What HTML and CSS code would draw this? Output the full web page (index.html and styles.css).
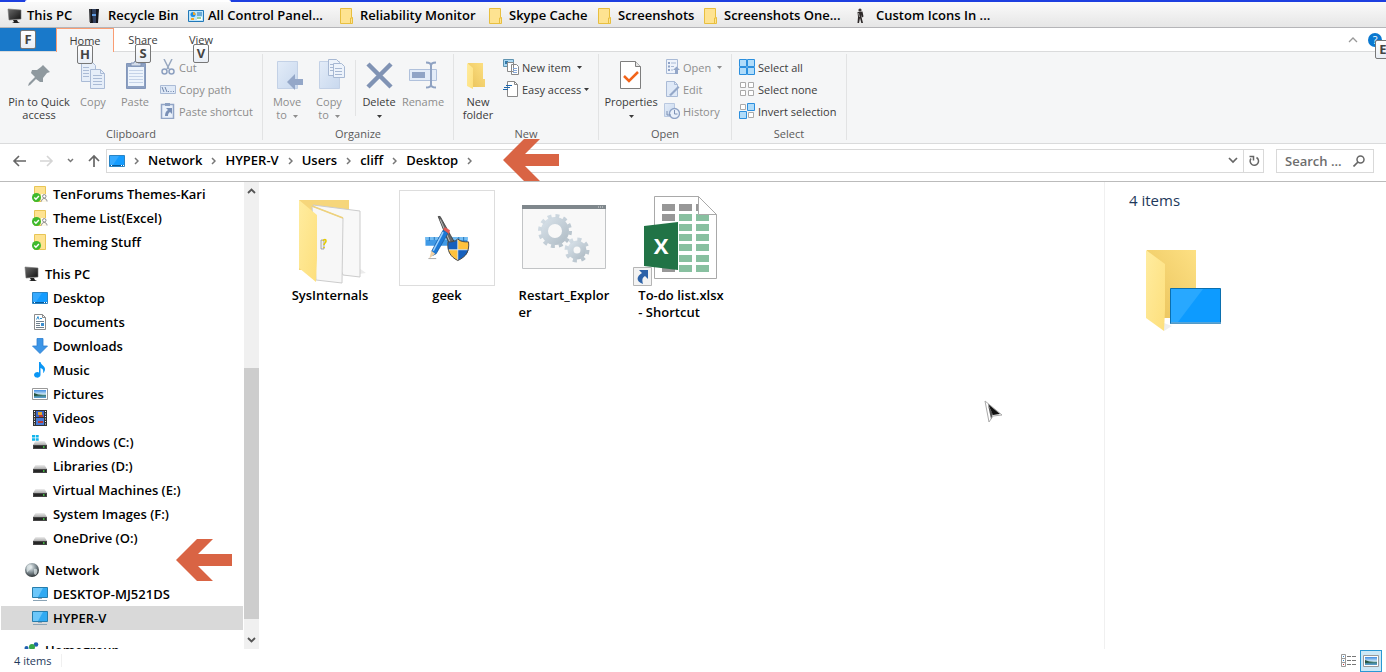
FILE: index.html
```html
<!doctype html>
<html lang="en">
<head>
  <meta charset="utf-8">
  <title>Desktop</title>
  <meta name="viewport" content="width=device-width, initial-scale=1">
  <link rel="stylesheet" href="styles.css">
</head>

<body>
  <svg class="defs" aria-hidden="true">
    <linearGradient id="g_folder" x1="0" y1="0" x2="1" y2="1"><stop offset="0" stop-color="#ffec9f"/><stop offset="1" stop-color="#fddf7c"/></linearGradient>
    <linearGradient id="g_back" x1="0" y1="1" x2="1" y2="0"><stop offset="0" stop-color="#e9c25a"/><stop offset="1" stop-color="#fde083"/></linearGradient>
    <linearGradient id="g_disabled" x1="0" y1="0" x2="1" y2="1"><stop offset="0" stop-color="#e3ecf8"/><stop offset="1" stop-color="#c8d8ee"/></linearGradient>
    <linearGradient id="g_dark" x1="0" y1="0" x2="1" y2="1"><stop offset="0" stop-color="#6b6b6b"/><stop offset="1" stop-color="#111"/></linearGradient>
    <linearGradient id="g_gear" x1="0" y1="0" x2="1" y2="1"><stop offset="0" stop-color="#d5dfe7"/><stop offset="1" stop-color="#b3bfc8"/></linearGradient>
    <linearGradient id="g_drive" x1="0" y1="0" x2="0" y2="1"><stop offset="0" stop-color="#eee"/><stop offset="1" stop-color="#aaa"/></linearGradient>
    <linearGradient id="g_sky" x1="0" y1="0" x2="0" y2="1"><stop offset="0" stop-color="#3f8be0"/><stop offset=".55" stop-color="#d5ecf8"/><stop offset=".6" stop-color="#3f7a6a"/><stop offset="1" stop-color="#5aa0d8"/></linearGradient>
    <radialGradient id="g_globe" cx=".4" cy=".3" r=".7"><stop offset="0" stop-color="#eef3f5"/><stop offset=".5" stop-color="#8a979d"/><stop offset="1" stop-color="#2e3437"/></radialGradient>

    <symbol id="i_pc" viewBox="0 0 16 16"><path d="M1 1l13 1v9l-12 1z" fill="url(#g_dark)" stroke="#777" stroke-width=".6"/><path d="M6 12h4l1 2 2 1H5l2-1z" fill="#222"/></symbol>
    <symbol id="i_bin" viewBox="0 0 16 16"><path d="M1 1h10l-1 14H2z" fill="#14161c"/><path d="M4 1h4v14H5z" fill="#30405e"/><path d="M4 6h4v2H4z" fill="#5f9be0"/><path d="M2 1v13" stroke="#555"/></symbol>
    <symbol id="i_panel" viewBox="0 0 16 16"><path d="M.5 2.500h15v11H.5z" fill="#bfe6fb" stroke="#2178b8"/><circle cx="5" cy="6.500" r="2.500" fill="#1a8ce0"/><path d="M5 4v3h2.500A2.500 2.500 0 0 0 5 4z" fill="#f5a623"/><path d="M9 5h5M9 7h5" stroke="#1a6fb0"/><path d="M3 11h3" stroke="#f5a623" stroke-width="2"/><path d="M9 9h5v3H9z" fill="#fff"/><path d="M9 10h4" stroke="#2da336"/></symbol>
    <symbol id="i_folder" viewBox="0 0 16 16"><path d="M.5.500h11v9h1v6H.5z" fill="#fee391" stroke="#e8bf3f"/><path d="M10.500 15V10h2" fill="none" stroke="#e8bf3f"/></symbol>
    <symbol id="i_man" viewBox="0 0 16 16"><circle cx="4" cy="2" r="1.600" fill="#3a3535"/><path d="M1.500 4l5-.5 1 5-1.500 1-.3-3L5.500 9 7 15H5.300L4 10 3 15H1.500l.5-6z" fill="#2d2828"/><path d="M2.500 5l1 4" stroke="#999"/></symbol>
    <symbol id="i_synced" viewBox="0 0 16 16"><path d="M2.500.5h11v15h-11z" fill="#fee391" stroke="#e8c556"/><circle cx="4.500" cy="11.500" r="4.500" fill="#3fb92c"/><path d="M2.300 11.500l1.600 1.700 3-3.200" fill="none" stroke="#fff" stroke-width="1.400"/></symbol>
    <symbol id="i_shared" viewBox="0 0 16 16"><use href="#i_synced"/><path d="M9 8h7v8H9z" fill="#fff" opacity=".85"/><circle cx="12.300" cy="10.300" r="1.700" fill="#fff" stroke="#888"/><path d="M9.500 15.500c0-4 5.500-4 5.500 0" fill="none" stroke="#888"/></symbol>
    <symbol id="i_desktop" viewBox="0 0 16 16"><path d="M.5 2.500h15v11H.5z" fill="#149cff" stroke="#2a84c4"/><path d="M1 3h9L4 12H1z" fill="#36aaff"/><path d="M1 12.500h14" stroke="#075a9a"/><path d="M2 12.500h1M12 12.500h1M14 12.500h1" stroke="#fff"/></symbol>
    <symbol id="i_doc" viewBox="0 0 16 16"><path d="M2.500.5h8l3 3v12h-11z" fill="#fff" stroke="#8b8b8b"/><path d="M10.500.5v3h3" fill="none" stroke="#8b8b8b"/><path d="M4.500 5.500L6 2.500l1 3M8 4.500h2" fill="none" stroke="#2f8fd0"/><path d="M4 7.500h8M4 9.500h4M4 11.500h4M4 13.500h8" stroke="#71808c"/><path d="M9 9h3v3H9z" fill="#3c8fd0"/></symbol>
    <symbol id="i_down" viewBox="0 0 16 16"><path d="M5 .5h6V8h4.500L8 15.500.5 8H5z" fill="#3d95e6" stroke="#2b7fd0" stroke-width=".8"/></symbol>
    <symbol id="i_music" viewBox="0 0 16 16"><path d="M7 0h1.500c.5 3 4.500 4 4.500 7 0 2-1 3.500-2 4 .8-3-.5-4.500-2.500-5v7A3.200 2.800 0 1 1 7 10.500z" fill="#0a96f5"/></symbol>
    <symbol id="i_pic" viewBox="0 0 16 16"><path d="M.5 2.500h15v11H.5z" fill="#fff" stroke="#999"/><path d="M2 4h12v8H2z" fill="url(#g_sky)"/><path d="M2 7c3 1 5 2 9 2l-9 1z" fill="#27543f"/></symbol>
    <symbol id="i_video" viewBox="0 0 16 16"><path d="M1 0h14v16H1z" fill="#333"/><path d="M4 1h8v6H4z" fill="#3b66c8"/><path d="M4 8h8v7H4z" fill="#477bd8"/><path d="M6 2h4v3H6z" fill="#e5a72c"/><path d="M7 5h4v2H7zM6 11h5v2H6z" fill="#b83b35"/><path d="M2.500 1v14M13.500 1v14" stroke="#fff" stroke-dasharray="1 1.500"/></symbol>
    <symbol id="i_drive" viewBox="0 0 16 16"><path d="M3.500 7h9L15 11H1z" fill="url(#g_drive)"/><path d="M1 11h14v4H1z" fill="#454545"/><path d="M2 12h12v2H2z" fill="#262626"/><path d="M11 12.300h1.500v1.400H11z" fill="#4be04b"/></symbol>
    <symbol id="i_windrive" viewBox="0 0 16 16"><use href="#i_drive"/><path d="M0 1h3v2.500H0zM3.700 1h3v2.500h-3zM0 4.200h3v2.500H0zM3.700 4.200h3v2.500h-3z" fill="#12b5ec"/></symbol>
    <symbol id="i_globe" viewBox="0 0 16 16"><circle cx="8" cy="8" r="7" fill="url(#g_globe)"/><path d="M3 4c3-3 5-1 5 1S5 8 4 10 2 7 3 4zM10 7c3-1 4 1 3 4s-3 2-3 0z" fill="#dfe8ea" opacity=".7"/></symbol>
    <symbol id="i_monitor" viewBox="0 0 16 16"><path d="M.5 1.500h15v10H.5z" fill="#31aaf2" stroke="#277dac"/><path d="M1 2h10l-5 9H1z" fill="#6cc7fa"/><path d="M6 12h4v1H6z" fill="#9ab"/><path d="M1 14.500h14" stroke="#8aa3b5"/></symbol>
    <symbol id="i_home" viewBox="0 0 16 16"><circle cx="2.500" cy="6" r="2" fill="#2060b0"/><circle cx="12" cy="2.500" r="2.300" fill="#2060b0"/><circle cx="8" cy="5" r="3" fill="#35a84a"/><path d="M3 16V10c0-4 10-4 10 0v6z" fill="#35a84a"/></symbol>
    <symbol id="i_chev" viewBox="0 0 5 8"><path d="M1 1l3 3-3 3" fill="none" stroke="#777" stroke-width="1.500"/></symbol>
    <symbol id="i_caret" viewBox="0 0 5 3"><path d="M0 0h5L2.500 3z" fill="currentColor"/></symbol>
    <symbol id="i_arrow" viewBox="0 0 56 42"><path d="M0 21L21 0h16L22 15h34v12H22l15 15H21z" fill="#d96444"/></symbol>
  </svg>

  <header class="bookmarks">
    <a class="bookmark" href="#"><svg class="icon"><use href="#i_pc"/></svg>This PC</a>
    <a class="bookmark" href="#"><svg class="icon"><use href="#i_bin"/></svg>Recycle Bin</a>
    <a class="bookmark" href="#"><svg class="icon"><use href="#i_panel"/></svg>All Control Panel...</a>
    <a class="bookmark" href="#"><svg class="icon"><use href="#i_folder"/></svg>Reliability Monitor</a>
    <a class="bookmark" href="#"><svg class="icon"><use href="#i_folder"/></svg>Skype Cache</a>
    <a class="bookmark" href="#"><svg class="icon"><use href="#i_folder"/></svg>Screenshots</a>
    <a class="bookmark" href="#"><svg class="icon"><use href="#i_folder"/></svg>Screenshots One...</a>
    <a class="bookmark" href="#"><svg class="icon"><use href="#i_man"/></svg>Custom Icons In ...</a>
  </header>

  <nav class="tabs">
    <button type="button" class="tab tab_file" aria-label="File"><span class="keytip keytip_file">F</span></button>
    <button type="button" class="tab tab_active">Home<span class="keytip">H</span></button>
    <button type="button" class="tab">Share<span class="keytip">S</span></button>
    <button type="button" class="tab">View<span class="keytip">V</span></button>
    <div class="tabs_right">
      <button type="button" class="plain" aria-label="Collapse ribbon"><svg width="10" height="6"><path d="M1 5l4-4 4 4" fill="none" stroke="#999" stroke-width="1.300"/></svg></button>
      <button type="button" class="help" aria-label="Help">?<span class="keytip keytip_help">E</span></button>
    </div>
  </nav>

  <section class="ribbon">
    <div class="group group_clipboard">
      <div class="group_body">
        <button type="button" class="big big_pin">
          <svg class="icon_big" viewBox="0 0 32 32"><path d="M20 6l7 7-3 1-4 5 0 4-3 0-4-3-6 6-2 1 1-3 6-6-4-4 1-3 5 0 4-3z" fill="#8f999f"/></svg>
          <span>Pin to Quick<br>access</span>
        </button>
        <button type="button" class="big" disabled>
          <svg class="icon_big" viewBox="0 0 32 32"><g fill="#e6eef9" stroke="#aabbd6"><path d="M4.500 2.500h10l4 4v16h-14z"/><path d="M13.500 10.500h10l4 4v15h-14z"/><path d="M23.500 10.500v4h4M6 8.500h6M6 11.500h6M6 14.500h6M6 17.500h6M16 16.500h9M16 19.500h9M16 22.500h9M16 25.500h9" fill="none"/></g></svg>
          <span>Copy</span>
        </button>
        <button type="button" class="big" disabled>
          <svg class="icon_big" viewBox="0 0 32 32"><path d="M7.500 4.500h19v25h-19z" fill="#8ca0c2" stroke="#8296ba"/><path d="M9 8h16v19H9z" fill="#edf4fc"/><path d="M12 7V4h3c0-3 4-3 4 0h3v3z" fill="#d4ddea" stroke="#7d90b3"/><path d="M10 11.500h14M10 14.500h14M10 17.500h14M10 20.500h14M10 23.500h14" stroke="#c5d3e8"/></svg>
          <span>Paste</span>
        </button>
        <div class="small_list">
          <button type="button" class="small" disabled><svg class="icon"><path d="M4 0l5 10M12 0L7 10" stroke="#98a8c0" stroke-width="1.500"/><circle cx="4.500" cy="12.500" r="2.500" fill="none" stroke="#8da0c0" stroke-width="1.500"/><circle cx="11.500" cy="12.500" r="2.500" fill="none" stroke="#8da0c0" stroke-width="1.500"/></svg>Cut</button>
          <button type="button" class="small" disabled><svg class="icon"><path d="M.5 4.500h15v8H.5z" fill="#dfe9f7" stroke="#aabbd6"/><path d="M2 6l2 5M5 6l2 5M8 10.500h1M10.500 10.500h1M13 10.500h1" stroke="#7186aa"/></svg>Copy path</button>
          <button type="button" class="small" disabled><svg class="icon"><path d="M1.500 1.500h12v14h-12z" fill="#e9f0fa" stroke="#92a5c6" stroke-width="1.500"/><path d="M5 0h5v3H5z" fill="#8ca0c2"/><path d="M6 5h6v6l-2-2c-2 1-2 3-2 4H5c0-3 1-5 3-6z" fill="#7a90b6"/></svg>Paste shortcut</button>
        </div>
      </div>
      <div class="group_name">Clipboard</div>
    </div>

    <div class="group group_organize">
      <div class="group_body">
        <button type="button" class="big" disabled>
          <svg class="icon_big" viewBox="0 0 32 32"><path d="M6.500 2.500h20v27h-20z" fill="url(#g_disabled)" stroke="#c3d1e6"/><path d="M16 23l8-8v5h8v6h-8v5z" fill="#94a7c8"/></svg>
          <span>Move<br>to&nbsp; <svg class="caret"><use href="#i_caret"/></svg></span>
        </button>
        <button type="button" class="big" disabled>
          <svg class="icon_big" viewBox="0 0 32 32"><path d="M6.500 2.500h20v27h-20z" fill="url(#g_disabled)" stroke="#c3d1e6"/><g fill="#edf3fb" stroke="#a7b8d3"><path d="M15.500.5h8l3 3v13h-11z"/><path d="M20.500 4.500h8l3 3v11h-11z"/><path d="M17 5.500h3M17 8.500h3M17 11.500h3M22 9.500h7M22 12.500h7M22 15.500h7"/></g></svg>
          <span>Copy<br>to&nbsp; <svg class="caret"><use href="#i_caret"/></svg></span>
        </button>
        <span class="divider"></span>
        <button type="button" class="big">
          <svg class="icon_big" viewBox="0 0 32 32"><path d="M5 5l23 23M28 5L5 28" stroke="#8093b4" stroke-width="4.500"/></svg>
          <span>Delete<br><svg class="caret"><use href="#i_caret"/></svg></span>
        </button>
        <button type="button" class="big big_rename" disabled>
          <svg class="icon_big" viewBox="0 0 32 32"><path d="M2.500 10.500h27v11h-27z" fill="#e3ecf8" stroke="#b0c1dc"/><path d="M5 13h13v6H5z" fill="#90a4c6"/><path d="M24 5v22M19 3.500c3 0 5 1 5 3 0-2 2-3 5-3M19 28.500c3 0 5-1 5-3 0 2 2 3 5 3" fill="none" stroke="#8fa2c2" stroke-width="2"/></svg>
          <span>Rename</span>
        </button>
      </div>
      <div class="group_name">Organize</div>
    </div>

    <div class="group group_new">
      <div class="group_body">
        <button type="button" class="big">
          <svg class="icon_big" viewBox="0 0 32 32"><path d="M6 4h15v16h2v8H8z" fill="url(#g_back)"/><path d="M5 4l6 5v21l-6-3z" fill="url(#g_folder)"/></svg>
          <span>New<br>folder</span>
        </button>
        <div class="small_list">
          <button type="button" class="small"><svg class="icon"><path d="M.5.5h10v7H.5z" fill="#a9d7f3" stroke="#5f93b0"/><path d="M2 2h3v3H2z" fill="#3379a8"/><path d="M4.500 3.500h6v9h-6zM8.500 5.500h5l2 2v8h-7z" fill="#fff" stroke="#888"/><path d="M10 9.500h4M10 11.500h4M10 13.500h4" stroke="#88a9d8"/></svg>New item&nbsp; <svg class="caret"><use href="#i_caret"/></svg></button>
          <button type="button" class="small"><svg class="icon"><path d="M4.500.5h7l3 3v12h-10z" fill="#fff" stroke="#888"/><path d="M11.500.5v3h3" fill="none" stroke="#888"/><path d="M3 4.500h6M1 6.500h6M0 8.500h5" stroke="#1f68ae" stroke-width="1.200"/></svg>Easy access <svg class="caret"><use href="#i_caret"/></svg></button>
        </div>
      </div>
      <div class="group_name">New</div>
    </div>

    <div class="group group_open">
      <div class="group_body">
        <button type="button" class="big big_properties">
          <svg class="icon_big" viewBox="0 0 32 32"><path d="M5.500 2.500h15l5 5v22h-20z" fill="#fff" stroke="#7e7e7e"/><path d="M20.500 2.500v5h5" fill="#e5e5e5" stroke="#7e7e7e"/><path d="M9 17l5 5 9-9" fill="none" stroke="#f2641a" stroke-width="2.500"/></svg>
          <span>Properties<br><svg class="caret"><use href="#i_caret"/></svg></span>
        </button>
        <div class="small_list">
          <button type="button" class="small" disabled><svg class="icon"><path d="M2.500.5h11v14h-11z" fill="#eef3fb" stroke="#a9bad6"/><path d="M4 3h2v2H4zM4 6.500h2v2H4zM4 10h2v2H4z" fill="#8fa3c6"/><path d="M7 4h5M7 7.500h3M7 11h2" stroke="#a9bad6"/><path d="M9 11l3.500-3.500L16 11h-2v4h-3v-4z" fill="#94a7c8"/></svg>Open&nbsp; <svg class="caret"><use href="#i_caret"/></svg></button>
          <button type="button" class="small" disabled><svg class="icon"><path d="M2.500.5h8l3 3v12h-11z" fill="#dfe9f7" stroke="#a9bad6"/><path d="M10.500.5v3h3" fill="none" stroke="#a9bad6"/><path d="M5 14l9-9 1.500 1.500L7 15z" fill="#94a7c8"/></svg>Edit</button>
          <button type="button" class="small" disabled><svg class="icon"><path d="M.5.5h10v13H.5z" fill="url(#g_disabled)" stroke="#b9c8e0"/><circle cx="10.500" cy="10.500" r="5" fill="#e9f0fa" stroke="#8fa3c6" stroke-width="1.300"/><path d="M10.500 7v4h3M3 8v4h4" fill="none" stroke="#7d91b5"/></svg>History</button>
        </div>
      </div>
      <div class="group_name">Open</div>
    </div>

    <div class="group group_select">
      <div class="group_body">
        <div class="small_list">
          <button type="button" class="small"><svg class="icon"><path d="M.500.500h7v7h-7zM8.500.500h7v7h-7zM.500 8.500h7v7h-7zM8.500 8.500h7v7h-7z" fill="#b0dcfa" stroke="#2b8fde"/></svg>Select all</button>
          <button type="button" class="small"><svg class="icon"><path d="M1.500 1.500h5v5h-5zM9.500 1.500h5v5h-5zM1.500 9.500h5v5h-5zM9.500 9.500h5v5h-5z" fill="#fff" stroke="#aaa"/></svg>Select none</button>
          <button type="button" class="small"><svg class="icon"><path d="M1.500 1.500h5v5h-5zM9.500 9.500h5v5h-5z" fill="#fff" stroke="#aaa"/><path d="M8.500.500h7v7h-7zM.500 8.500h7v7h-7z" fill="#b0dcfa" stroke="#2b8fde"/></svg>Invert selection</button>
        </div>
      </div>
      <div class="group_name">Select</div>
    </div>
  </section>

  <section class="address">
    <div class="history">
      <button type="button" class="plain" aria-label="Back"><svg width="14" height="12"><path d="M14 6H2M7 1L2 6l5 5" fill="none" stroke="#666" stroke-width="1.600"/></svg></button>
      <button type="button" class="plain" aria-label="Forward"><svg width="14" height="12"><path d="M0 6h12M7 1l5 5-5 5" fill="none" stroke="#d5d5d5" stroke-width="1.600"/></svg></button>
      <button type="button" class="plain" aria-label="Recent"><svg width="7" height="5"><path d="M1 1l2.500 2.500L6 1" fill="none" stroke="#777" stroke-width="1.500"/></svg></button>
      <button type="button" class="plain" aria-label="Up"><svg width="12" height="13"><path d="M6 13V2M1 7l5-5 5 5" fill="none" stroke="#666" stroke-width="1.700"/></svg></button>
    </div>
    <div class="path">
      <svg class="icon"><use href="#i_desktop"/></svg>
      <svg class="chev"><use href="#i_chev"/></svg>
      <a href="#">Network</a><svg class="chev"><use href="#i_chev"/></svg>
      <a href="#">HYPER-V</a><svg class="chev"><use href="#i_chev"/></svg>
      <a href="#">Users</a><svg class="chev"><use href="#i_chev"/></svg>
      <a href="#">cliff</a><svg class="chev"><use href="#i_chev"/></svg>
      <a href="#">Desktop</a><svg class="chev"><use href="#i_chev"/></svg>
      <div class="path_buttons">
        <button type="button" class="plain" aria-label="Previous locations"><svg width="10" height="7"><path d="M1 1l4 4 4-4" fill="none" stroke="#666" stroke-width="1.700"/></svg></button>
        <button type="button" class="plain refresh" aria-label="Refresh"><svg width="12" height="12"><path d="M8.500 2.500A4.200 4.200 0 1 1 3 3.500M1.500 1.500h4v4" fill="none" stroke="#666" stroke-width="1.500"/></svg></button>
      </div>
    </div>
    <label class="search">
      <input type="text" placeholder="Search ..." aria-label="Search Desktop">
      <svg width="12" height="12"><circle cx="7.500" cy="4.500" r="3.500" fill="none" stroke="#666" stroke-width="1.500"/><path d="M5 7l-4.500 4.500" stroke="#666" stroke-width="1.700"/></svg>
    </label>
    <svg class="marker marker_path"><use href="#i_arrow"/></svg>
  </section>

  <main class="explorer">
    <aside class="tree">
      <ul>
        <li><a href="#"><svg class="icon"><use href="#i_shared"/></svg>TenForums Themes-Kari</a></li>
        <li><a href="#"><svg class="icon"><use href="#i_shared"/></svg>Theme List(Excel)</a></li>
        <li><a href="#"><svg class="icon"><use href="#i_synced"/></svg>Theming Stuff</a></li>
        <li class="root"><a href="#"><svg class="icon"><use href="#i_pc"/></svg>This PC</a></li>
        <li><a href="#"><svg class="icon"><use href="#i_desktop"/></svg>Desktop</a></li>
        <li><a href="#"><svg class="icon"><use href="#i_doc"/></svg>Documents</a></li>
        <li><a href="#"><svg class="icon"><use href="#i_down"/></svg>Downloads</a></li>
        <li><a href="#"><svg class="icon"><use href="#i_music"/></svg>Music</a></li>
        <li><a href="#"><svg class="icon"><use href="#i_pic"/></svg>Pictures</a></li>
        <li><a href="#"><svg class="icon"><use href="#i_video"/></svg>Videos</a></li>
        <li><a href="#"><svg class="icon"><use href="#i_windrive"/></svg>Windows (C:)</a></li>
        <li><a href="#"><svg class="icon"><use href="#i_drive"/></svg>Libraries (D:)</a></li>
        <li><a href="#"><svg class="icon"><use href="#i_drive"/></svg>Virtual Machines (E:)</a></li>
        <li><a href="#"><svg class="icon"><use href="#i_drive"/></svg>System Images (F:)</a></li>
        <li><a href="#"><svg class="icon"><use href="#i_drive"/></svg>OneDrive (O:)</a></li>
        <li class="root"><a href="#"><svg class="icon"><use href="#i_globe"/></svg>Network</a></li>
        <li><a href="#"><svg class="icon"><use href="#i_monitor"/></svg>DESKTOP-MJ521DS</a></li>
        <li class="selected"><a href="#"><svg class="icon"><use href="#i_monitor"/></svg>HYPER-V</a></li>
        <li class="root"><a href="#"><svg class="icon"><use href="#i_home"/></svg>Homegroup</a></li>
      </ul>
      <svg class="marker marker_tree"><use href="#i_arrow"/></svg>
    </aside>
    <div class="scrollbar">
      <svg width="9" height="6"><path d="M1 5l3.500-3.500L8 5" fill="none" stroke="#555" stroke-width="1.800"/></svg>
      <div class="track"><div class="thumb"></div></div>
      <svg width="9" height="6"><path d="M1 1l3.500 3.500L8 1" fill="none" stroke="#555" stroke-width="1.800"/></svg>
    </div>

    <div class="files">
      <a class="file" href="#">
        <svg class="thumbnail" viewBox="0 0 96 96">
          <path d="M17 10h50v70H17z" fill="#f6d67b"/>
          <path d="M62 86l22-3-7-5z" fill="#ececec"/>
          <path d="M31 15l47 6v66l-17-2z" fill="#f8f8f8" stroke="#ccc"/>
          <path d="M30 16l31 12-1 65-26-3z" fill="#f7f7f7" stroke="#ccc"/>
          <path d="M30 16l31 12" stroke="#efd27b" stroke-width="1.500"/>
          <path d="M17 10l18 15v43l-1 24-17-14z" fill="url(#g_folder)"/>
          <path d="M39 50h3v9h-3z" fill="#eee" stroke="#888" stroke-width=".7"/><path d="M41 51c1-2 3-2 3 0s-2 2-2 4M42 57v1" fill="none" stroke="#e6cc00" stroke-width="1.600"/>
        </svg>
        <span>SysInternals</span>
      </a>
      <a class="file" href="#">
        <svg class="thumbnail framed" viewBox="0 0 96 96">
          <path d="M26 47h43v9H26z" fill="#3f99e6"/><path d="M26 47h43v3H26z" fill="#74bdf3"/><path d="M30 47v4M35 47v3M40 47v4M60 47v3M65 47v4" stroke="#2374b8"/>
          <path d="M39 26l2 0 15 27-5 3z" fill="#666" stroke="#333" stroke-width=".8"/><path d="M41 29l10 23" stroke="#bbb"/>
          <path d="M44 40l5 3-12 21-4 2-1-4z" fill="#1c79d6" stroke="#135399" stroke-width=".7"/><path d="M44 42l-10 19" stroke="#9bd2ff" stroke-width="1.500"/>
          <path d="M44 39l2-2 5 3-1 4z" fill="#e25a55"/><path d="M32 61l4 3-6 5z" fill="#eed0a5"/><path d="M29 69h8" stroke="#aaa"/>
          <path d="M59 49c3 3 7 3 11 3 1 9-2 15-11 19-8-4-11-10-10-19 4 0 7 0 10-3z" fill="#ffc23c"/><path d="M59 49v11H49v-8c4 0 7 0 10-3zM59 60h11c-1 5-5 8-11 11z" fill="#1660bd"/>
          <path d="M59 49v22M49 60h21" stroke="#e8f1f8" stroke-width=".8"/><path d="M59 49c3 3 7 3 11 3 1 9-2 15-11 19-8-4-11-10-10-19 4 0 7 0 10-3z" fill="none" stroke="#484848"/>
        </svg>
        <span>geek</span>
      </a>
      <a class="file" href="#">
        <svg class="thumbnail" viewBox="0 0 96 96">
          <path d="M6.500 15.500h83v63h-83z" fill="#f8f8f8" stroke="#c2c4c6"/><path d="M6 15h84v4H6z" fill="#7f878c"/><path d="M82 17h6" stroke="#ddd" stroke-dasharray="1 1"/>
          <g fill="none" stroke="url(#g_gear)"><circle cx="39" cy="41" r="10.500" stroke-width="7"/><circle cx="39" cy="41" r="15" stroke-width="4" stroke-dasharray="3.900 3.954"/><circle cx="61" cy="60" r="6.500" stroke-width="6"/><circle cx="61" cy="60" r="10.500" stroke-width="4" stroke-dasharray="4 4.247"/></g>
        </svg>
        <span>Restart_Explor<br>er</span>
      </a>
      <a class="file" href="#">
        <svg class="thumbnail" viewBox="0 0 96 96">
          <path d="M21.500 6.500h44l18 18v64h-62z" fill="#fff" stroke="#a9a9a9"/>
          <path d="M29 14h13v7H29zM46 14h13v7H46zM63 14h2v7h-2zM29 24h13v7H29zM29 78h13v4H29z" fill="#979797"/>
          <path d="M46 24h13v7H46zM63 24h13v7H63zM46 34h13v7H46zM63 34h13v7H63zM46 44h13v7H46zM63 44h13v7H63zM46 54h13v7H46zM63 54h13v7H63zM46 65h13v7H46zM63 65h13v7H63zM46 75h13v7H46zM63 75h13v7H63z" fill="#88c0a0"/>
          <path d="M65.500 6.500v18h18z" fill="#fff" stroke="#a9a9a9"/>
          <path d="M11 36l34-4v48l-34-4z" fill="#217346"/>
          <text x="28" y="64" class="excel_x">X</text>
          <path d="M.5 77.500h18v18H.5z" fill="#f3f3f3" stroke="#b5b5b5"/><path d="M6 80h9v9l-3-3c-3 2-3 4-2 8-8-3-6-8-1-11z" fill="#2c62a8"/>
        </svg>
        <span>To-do list.xlsx<br>- Shortcut</span>
      </a>
      <svg class="cursor" viewBox="0 0 20 24"><path d="M1 1l4 21 4-6 9-1z" fill="#fff" stroke="#aaa"/><path d="M4 5l3 14 2-5z" fill="#555"/><path d="M4 4l12 10-7 1z" fill="#111"/></svg>
    </div>

    <aside class="details">
      <h1>4 items</h1>
      <svg class="folder_large" viewBox="0 0 76 84">
        <path d="M1 1h49v68H1z" fill="url(#g_back)"/><path d="M18 82l8-5-8-3z" fill="#eee"/>
        <path d="M0 1l19 14v46l-1 21-18-13z" fill="url(#g_folder)"/>
        <path d="M24.500 39.500h50v35h-50z" fill="#0d9bff" stroke="#0b6fae"/><path d="M25 40h32L32 73h-7z" fill="#28a8ff"/><path d="M25 74h50" stroke="#6ca9cf" stroke-width="1.500"/>
      </svg>
    </aside>
  </main>

  <footer class="status">
    <span class="count">4 items</span>
    <button type="button" class="view" aria-label="Details view"><svg width="18" height="14"><path d="M1.500.5h4v4h-4zM1.500 4.500h4v4h-4zM1.500 8.500h4v4h-4z" fill="#fff" stroke="#999"/><path d="M7 2.500h4M12 2.500h4M7 6.500h4M12 6.500h4M7 10.500h4M12 10.500h4" stroke="#777"/><path d="M3 6h1v1H3zM3 2h1v1H3z" fill="#38c"/><path d="M3 10h1v1H3z" fill="#c33"/></svg></button>
    <button type="button" class="view view_on" aria-label="Large icons view"><svg class="icon"><use href="#i_pic"/></svg></button>
  </footer>
</body>
</html>
```
FILE: styles.css
```css
* {
  box-sizing: border-box;
}

body {
  display: flex;
  flex-direction: column;
  height: 100vh;
  margin: 0;
  background: #fff;
  color: #000;
  font: 11px/13px "Open Sans", sans-serif;
  overflow: hidden;
}

a {
  color: inherit;
  text-decoration: none;
}

button {
  padding: 0;
  border: 0;
  background: none;
  color: #3b3b3b;
  font: inherit;
}

svg {
  flex: none;
}

.defs {
  position: absolute;
  width: 0;
  height: 0;
}

.icon {
  width: 16px;
  height: 16px;
}

.plain {
  display: flex;
}

.bookmarks,
.address,
.tree,
.file {
  font-size: 13px;
  font-weight: 600;
}

/* bookmarks */

.bookmarks {
  position: relative;
  display: grid;
  grid-template-columns: 81px 100px 152px 149px 109px 106px 152px auto;
  align-items: center;
  height: 28px;
  padding-left: 7px;
  border-top: 2px solid #1d3fe0;
  border-bottom: 1px solid #b5b5b8;
  background: linear-gradient(#fafafa, #e6e6e6);
}

/* open end of the selected window tab */
.bookmarks::before {
  content: "";
  position: absolute;
  top: -2px;
  left: 25px;
  width: 206px;
  height: 2px;
  border-radius: 2px 2px 0 0;
  background: #fff;
}

.bookmark {
  display: flex;
  align-items: center;
  gap: 4px;
  padding-top: 2px;
  white-space: nowrap;
}

/* tabs */

.tabs {
  display: flex;
  height: 24px;
  border-bottom: 1px solid #dadbdc;
}

.tab {
  position: relative;
  width: 58px;
}

.tab_file {
  width: 56px;
  background: #1979ca;
}

.tab_active {
  height: 24px;
  border: 1px solid #fa9d73;
  border-bottom: 0;
  background: #f5f6f7;
}

.keytip {
  position: absolute;
  top: 16px;
  left: 50%;
  width: 16px;
  height: 19px;
  margin-left: -8px;
  border: 1px solid #777;
  border-radius: 2px;
  background: linear-gradient(#fff, #e9eef5);
  color: #444;
  font-size: 13px;
  font-weight: bold;
  line-height: 17px;
  text-align: center;
}

.keytip_file {
  top: 2px;
}

.tabs_right {
  display: flex;
  align-items: center;
  gap: 10px;
  margin-left: auto;
  padding-right: 4px;
}

.help {
  position: relative;
  width: 14px;
  height: 14px;
  border-radius: 50%;
  background: #0a78d0;
  color: #fff;
}

.keytip_help {
  top: 7px;
  margin-left: 0;
}

/* ribbon */

.ribbon {
  display: flex;
  height: 92px;
  border-bottom: 1px solid #dadbdc;
  background: #f5f6f7;
}

.group {
  display: flex;
  flex-direction: column;
  justify-content: space-between;
  margin: 2px 0 3px;
  padding-top: 2px;
  border-right: 1px solid #e2e3e4;
}

.group_clipboard {
  width: 263px;
}

.group_organize {
  width: 191px;
}

.group_new {
  width: 145px;
}

.group_open {
  width: 133px;
}

.group_select {
  width: 115px;
}

.group_body {
  display: flex;
  padding: 0 3px;
}

.group_clipboard .group_body {
  padding-left: 6px;
}

.group_name {
  color: #5a5a5a;
  text-align: center;
}

.big {
  display: flex;
  flex-direction: column;
  align-items: center;
  justify-content: flex-start;
  gap: 4px;
  min-width: 42px;
  height: 66px;
  padding-top: 3px;
  white-space: nowrap;
}

.big_pin {
  min-width: 66px;
}

.big_rename {
  min-width: 46px;
}

.big_properties {
  min-width: 58px;
}

.icon_big {
  width: 32px;
  height: 32px;
}

.small_list {
  display: flex;
  flex-direction: column;
  padding-left: 4px;
}

.small {
  display: flex;
  align-items: center;
  gap: 3px;
  height: 22px;
  white-space: nowrap;
}

.big:disabled,
.small:disabled {
  color: #8d8d8d;
}

.caret {
  width: 5px;
  height: 3px;
  vertical-align: middle;
}

.divider {
  width: 1px;
  height: 56px;
  margin: 4px 2px 0 5px;
  background: #e2e3e4;
}

/* address bar */

.address {
  position: relative;
  display: flex;
  align-items: center;
  gap: 12px;
  height: 38px;
  padding: 0 12px 4px;
  border-bottom: 1px solid #bbb;
}

.history {
  display: flex;
  align-items: center;
  justify-content: space-between;
  width: 88px;
  margin-right: -6px;
}

.path {
  display: flex;
  flex: 1;
  align-items: center;
  gap: 9px;
  height: 24px;
  padding-left: 2px;
  border: 1px solid #d9d9d9;
}

.chev {
  width: 5px;
  height: 8px;
}

.path_buttons {
  display: flex;
  gap: 5px;
  height: 22px;
  margin-left: auto;
}

.path_buttons .plain {
  align-items: center;
}

.path_buttons .refresh {
  justify-content: center;
  width: 20px;
  border-left: 1px solid #d9d9d9;
}

.search {
  display: flex;
  align-items: center;
  width: 98px;
  height: 24px;
  padding: 0 8px;
  border: 1px solid #d9d9d9;
}

.search input {
  flex: 1;
  min-width: 0;
  padding: 0;
  border: 0;
  background: none;
  font: inherit;
}

.search input::placeholder {
  color: #6d6d6d;
}

.marker {
  position: absolute;
  width: 56px;
  height: 42px;
}

.marker_path {
  top: -5px;
  left: 503px;
}

.marker_tree {
  top: 357px;
  left: 176px;
}

/* explorer */

.explorer {
  display: flex;
  flex: 1;
  min-height: 0;
}

.tree {
  position: relative;
  width: 244px;
  padding: 0 1px;
  overflow: hidden;
}

.tree ul {
  margin: 0;
  padding: 0;
  list-style: none;
}

.tree a {
  display: flex;
  align-items: center;
  gap: 5px;
  height: 24px;
  padding-left: 31px;
}

.tree .root {
  margin-top: 8px;
}

.tree .root a {
  padding-left: 23px;
}

.tree .selected {
  background: #d9d9d9;
}

.scrollbar {
  display: flex;
  flex-direction: column;
  align-items: center;
  width: 15px;
  padding: 6px 0;
  background: #f0f0f0;
}

.track {
  display: flex;
  flex: 1;
  flex-direction: column;
  justify-content: flex-end;
  width: 15px;
  padding-bottom: 18px;
}

.thumb {
  height: 59%;
  background: #cdcdcd;
}

.files {
  position: relative;
  display: flex;
  flex: 1;
  align-items: flex-start;
  gap: 21px;
  padding: 8px 23px;
}

.file {
  display: flex;
  flex-direction: column;
  align-items: center;
  width: 96px;
  line-height: 17px;
  white-space: nowrap;
}

.thumbnail {
  width: 96px;
  height: 96px;
  margin-bottom: 1px;
}

.framed {
  border: 1px solid #ddd;
}

.excel_x {
  fill: #fff;
  font-size: 22px;
  font-weight: bold;
  text-anchor: middle;
}

.cursor {
  position: absolute;
  top: 218px;
  left: 725px;
  width: 20px;
  height: 24px;
}

.details {
  width: 282px;
  padding: 9px 24px;
  border-left: 1px solid #f0f0f0;
}

.details h1 {
  margin: 0 0 40px;
  color: #1e395b;
  font-size: 15px;
  font-weight: normal;
  line-height: 18px;
}

.folder_large {
  display: block;
  width: 76px;
  height: 84px;
  margin-left: 17px;
}

/* status bar */

.status {
  display: flex;
  align-items: center;
  height: 23px;
  padding: 0 4px 0 14px;
  color: #1e395b;
}

.count {
  margin-right: auto;
  padding-right: 10px;
  border-right: 1px solid #f0f0f0;
}

.view {
  display: flex;
  align-items: center;
  justify-content: center;
  width: 22px;
  height: 22px;
}

.view_on {
  border: 1px solid #2a98d4;
  background: #cce8f7;
}
```
